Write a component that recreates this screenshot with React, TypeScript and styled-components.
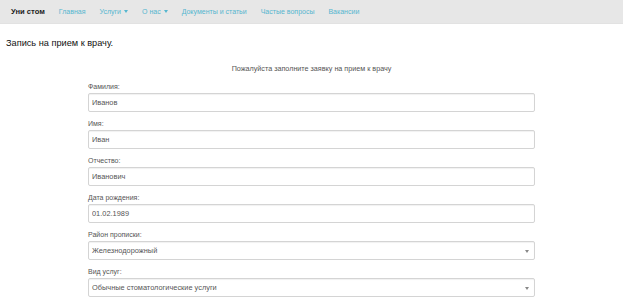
import React from "react";
import styled, { createGlobalStyle } from "styled-components";

const GlobalStyle = createGlobalStyle`
  body {
    margin: 0;
    background: #ffffff;
    font-family: "Liberation Sans", Arial, sans-serif;
    color: #333333;
  }
`;

const navItems = [
  { title: "Главная" },
  { title: "Услуги", dropdown: true },
  { title: "О нас", dropdown: true },
  { title: "Документы и статьи" },
  { title: "Частые вопросы" },
  { title: "Вакансии" },
];

const fields = [
  { label: "Фамилия:", value: "Иванов" },
  { label: "Имя:", value: "Иван" },
  { label: "Отчество:", value: "Иванович" },
  { label: "Дата рождения:", value: "01.02.1989" },
  { label: "Район прописки:", value: "Железнодорожный", select: true },
  { label: "Вид услуг:", value: "Обычные стоматологические услуги", select: true },
];

const App = () => {
  return (
    <>
      <GlobalStyle />
      <Navbar>
        <Brand>Уни стом</Brand>
        {navItems.map((item) => (
          <NavLink key={item.title}>
            {item.title}
            {item.dropdown && <Caret />}
          </NavLink>
        ))}
      </Navbar>
      <PageTitle>Запись на прием к врачу.</PageTitle>
      <Form>
        <Subtitle>Пожалуйста заполните заявку на прием к врачу</Subtitle>
        {fields.map((field) => (
          <FormGroup key={field.label}>
            <Label>{field.label}</Label>
            {field.select ? (
              <SelectBox>
                <span>{field.value}</span>
              </SelectBox>
            ) : (
              <Input type="text" defaultValue={field.value} readOnly />
            )}
          </FormGroup>
        ))}
      </Form>
    </>
  );
};

const Navbar = styled.nav`
  display: flex;
  align-items: center;
  height: 24px;
  padding-left: 4px;
  background: #e7e7e7;
  border-bottom: 1px solid #e2e2e2;
  box-sizing: border-box;
`;

const Brand = styled.span`
  padding: 0 7px;
  font-size: 7.6px;
  font-weight: 700;
  color: #222222;
`;

const NavLink = styled.a`
  display: flex;
  align-items: center;
  padding: 0 7px;
  font-size: 7px;
  color: #55b6cf;
  cursor: pointer;
`;

const Caret = styled.span`
  margin-left: 3px;
  width: 0;
  height: 0;
  border-left: 2.5px solid transparent;
  border-right: 2.5px solid transparent;
  border-top: 3px solid #55b6cf;
`;

const PageTitle = styled.h1`
  margin: 13px 0 0 6px;
  font-size: 9.2px;
  line-height: 12px;
  font-weight: 400;
  color: #111111;
`;

const Form = styled.form`
  width: 447px;
  margin: 15px auto 0;
`;

const Subtitle = styled.p`
  margin: 0 0 8px;
  text-align: center;
  font-size: 7.2px;
  line-height: 10px;
  color: #555555;
`;

const FormGroup = styled.div`
  display: flex;
  flex-direction: column;
  gap: 1.5px;
  margin-bottom: 7.5px;
`;

const Label = styled.label`
  font-size: 7px;
  line-height: 9px;
  color: #555555;
`;

const fieldBox = `
  box-sizing: border-box;
  width: 100%;
  height: 19px;
  padding: 0 3px;
  border: 1px solid #d4d4d4;
  border-radius: 2px;
  background: #ffffff;
  box-shadow: inset 0 1px 1px rgba(0, 0, 0, 0.06);
  font-family: "Liberation Sans", Arial, sans-serif;
  font-size: 7.4px;
  color: #555555;
`;

const Input = styled.input`
  ${fieldBox}
  outline: none;
`;

const SelectBox = styled.div`
  ${fieldBox}
  position: relative;
  display: flex;
  align-items: center;

  &::after {
    content: "";
    position: absolute;
    right: 5px;
    top: 8px;
    border-left: 2px solid transparent;
    border-right: 2px solid transparent;
    border-top: 3px solid #888888;
  }
`;

export default App;
